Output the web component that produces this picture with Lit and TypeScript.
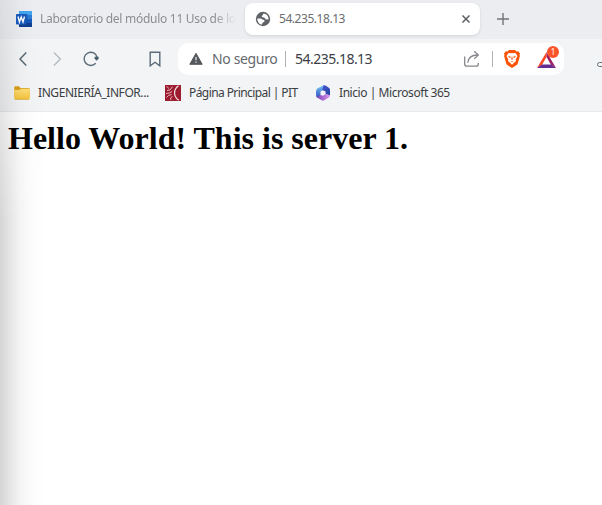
import { LitElement, html, css, svg } from "lit";
import { customElement } from "lit/decorators.js";

const word = html`<svg width="16" height="16" viewBox="0 0 16 16">
  <rect x="3" width="13" height="4" fill="#41a5ee"/><rect x="3" y="4" width="13" height="4" fill="#2b7cd3"/>
  <rect x="3" y="8" width="13" height="4" fill="#185abd"/><rect x="3" y="12" width="13" height="4" fill="#103f91"/>
  <rect x="5" y="3" width="6.5" height="11" fill="#103f91" opacity=".4"/>
  <rect y="3" width="10.5" height="10.5" rx=".8" fill="#185abd"/>
  <path d="M2 5.5 3.4 11 5.2 6 7 11 8.500 5.500" fill="none" stroke="#fff" stroke-width="1.400"/></svg>`;

const globe = html`<svg width="16" height="16" viewBox="0 0 16 16">
  <circle cx="8" cy="8" r="7.200" fill="#5f6368"/>
  <path d="M2.300 7.500C4 7.300 6.800 7.200 7.300 8.500L9.500 9.300 9.300 11 7.600 11.500 7 13.600C4.200 13.300 2.200 10.700 2.300 7.500z" fill="#fff"/>
  <path d="M8.500 2.400 7.700 4.200 6.600 4.900 7.200 6.300 9.300 6.600 10.600 8.300 13.600 8.600C13.800 5.300 12 2.800 8.500 2.400z" fill="#fff"/></svg>`;

const line = (d: string, color: string, w = 1.4) =>
  html`<svg width="18" height="18" viewBox="0 0 18 18" fill="none" stroke=${color} stroke-width=${w}>${svg`<path d=${d} />`}</svg>`;

const reload = html`<svg width="18" height="18" viewBox="0 0 18 18">
  <path d="M13.700 13.200A6.600 6.600 0 1 1 15.200 7.500" fill="none" stroke="#5b6b78" stroke-width="1.400"/>
  <path d="M12.600 6.700h4v2l-2 2-2-2z" fill="#44606f"/></svg>`;

const warning = html`<svg width="14" height="14" viewBox="0 0 14 14">
  <path d="M7 1.300 13.200 12.300H.8z" fill="#55595e" stroke="#55595e" stroke-width="1" stroke-linejoin="round"/>
  <path d="M7 5v3.300M7 9.500v1.300" stroke="#fff" stroke-width="1.100"/></svg>`;

const share = html`<svg width="18" height="18" viewBox="0 0 18 18" fill="none" stroke="#85878b" stroke-width="1.300">
  <path d="M1.700 6.500V14q0 2.200 2.200 2.200h9.200q2.200 0 2.200-2.200v-1M4.800 12.800C5.300 7.800 8.200 5 14.500 5M11.200 1.300 15.300 5 11.200 8.900"/></svg>`;

const lion = html`<svg width="16" height="18" viewBox="0 0 16 18">
  <path d="M5 0h6l1.500 1.400 1.700-.2L16 3.400l-.5 1.600.4 1-2 7.300q-.3 1-1.200 1.700L8 18l-4.700-3q-.9-.7-1.200-1.700L.1 6l.4-1L0 3.400l1.800-2.200 1.700.2z" fill="#fb5407"/>
  <path d="M5.200 2.900 8 3.300l2.800-.4 1.400.9 1.200 2.400-1.700 3.300.3 1.600-2 1.600L8 14.800l-2-2.100-2-1.600.3-1.600-1.700-3.300 1.200-2.400z" fill="#fff"/>
  <path d="m4 6 2.400.4.500 1-1.700.4zM12 6l-2.400.4-.5 1 1.700.4zM6.200 10.700 8 11.400l1.800-.7L8 12.500zM7.700 6.500h.6l.4 2.800L8 10l-.7-.7z" fill="#fb5407"/></svg>`;

const bat = html`<svg width="19" height="16" viewBox="0 0 19 16">
  <path d="M9.500 0 0 16l5-3.300L9.500 5z" fill="#ff4724"/>
  <path d="M9.500 0 19 16l-5-3.300L9.500 5z" fill="#9e1f63"/>
  <path d="M0 16h19l-5-3.500H5z" fill="#662d91"/></svg>`;

const folder = html`<svg width="16" height="14" viewBox="0 0 16 14">
  <defs><linearGradient id="f" x2="0" y2="1"><stop stop-color="#ffe07a"/><stop offset="1" stop-color="#f7c43b"/></linearGradient></defs>
  <path d="M.3 1.300q0-1 1-1h3.500L6.500 2h8.200q1 0 1 1v8H.3z" fill="#dda01d"/>
  <path d="M.3 4h5L7 2.800h8.700v9.400q0 1-1 1H1.300q-1 0-1-1z" fill="url(#f)"/><path d="M.8 13.300h14.500" stroke="#d9a52c" stroke-width=".8"/></svg>`;

const pit = html`<svg width="16" height="16" viewBox="0 0 16 16">
  <path d="M0 0h16v16H0z" fill="#9c1c30"/>
  <path d="M13.500 .8C8.200 4.500 8.200 11.500 13.800 15.300" fill="none" stroke="#f4dfe2" stroke-width="1.200"/>
  <path d="M1.500 1.500 4 3.500M7.500 1.500 5 5 2 5.500M7 6.500 4.500 8 1 8.500M6.500 9.500 3.500 10.500 1.500 12.500M7.500 11.500 5.500 13 6 15" fill="none" stroke="#e5b3ba" stroke-width="1"/></svg>`;

const m365 = html`<svg width="16" height="16" viewBox="0 0 16 16">
  <defs><linearGradient id="a" x2="0" y2="1"><stop stop-color="#73c5f4"/><stop offset="1" stop-color="#3551bf"/></linearGradient>
  <linearGradient id="b"><stop stop-color="#7b3bb5"/><stop offset="1" stop-color="#dc9bee"/></linearGradient>
  <linearGradient id="c" x2="1" y2="1"><stop stop-color="#4a55d5"/><stop offset="1" stop-color="#20459d"/></linearGradient></defs>
  <path d="M8.500.3 2.800 3.300Q1 4.300 1 6.300v4q0 2 2 2.500l2.500-1.800V6.500L9.800 4z" fill="url(#a)"/>
  <path d="M8.500.3q1-.3 2 .3l3 1.800Q15 3.300 15 5v5.500L10.600 9V6.500L7.200 5z" fill="url(#c)"/>
  <path d="M1.300 11.500q.3.800 1.200 1.300l4.200 2.500q1.300.8 2.600 0l4.200-2.500q1.500-1 1.500-2.600L10.600 9 8 10.700l-2.500-.8-2.300 2.200z" fill="url(#b)"/></svg>`;

@customElement("app-root")
export class AppRoot extends LitElement {
  static styles = css`
    :host { display: block; position: relative; width: 602px; height: 505px; overflow: hidden; background: #fff;
      font: 12px/16px "Noto Sans", "Open Sans", sans-serif; color: #3b3e42; }
    * { box-sizing: border-box; }
    svg { display: block; flex: none; }
    span { white-space: nowrap; }
    .tabs { height: 39px; background: #ecedf1; display: flex; align-items: flex-start; padding-top: 3px; }
    .tab { height: 32px; display: flex; align-items: center; color: #8b8d91; }
    .idle { width: 245px; padding-left: 16px; }
    .idle span { margin-left: 8px; width: 196px; letter-spacing: -.28px;
      mask-image: linear-gradient(90deg, #000 174px, transparent 196px); }
    .active { width: 235px; background: #fff; border-radius: 8px; padding: 0 8px 0 10px; color: #6a6c70;
      box-shadow: 0 1px 3px #0000001c; }
    .active span { flex: 1; margin-left: 8px; letter-spacing: -.45px; }
    .plus { margin: 7px 0 0 14px; }
    .bar { height: 40px; background: #f3f4f6; display: flex; align-items: center; padding-left: 14px; }
    .gap { margin-left: 16px; }
    .mark { margin-left: 46px; }
    .address { flex: none; width: 386px; height: 32px; margin-left: 14px; border-radius: 10px; background: #fff; display: flex;
      align-items: center; padding-left: 11px; font-size: 14px; }
    .address > * { flex: none; }
    .insecure { margin-left: 9px; width: 65px; color: #65686d; letter-spacing: -.35px; }
    .rule { width: 1px; height: 16px; background: #b0b2b6; margin-left: 8px; }
    .share + .rule { margin-left: 11px; }
    .url { margin-left: 9px; width: 168px; letter-spacing: -.52px; color: #3b3e44; }
    .lion { margin-left: 11px; }
    .bat { margin-left: 17px; position: relative; top: 1px; }
    .badge { position: absolute; left: 10px; top: -6px; width: 12px; height: 12px; border-radius: 6px;
      background: #fb542b; color: #fff; font-size: 8px; line-height: 12px; text-align: center; }
    .key { margin: 11px 0 0 33px; width: 8px; height: 5px; border: 1.5px solid #5f6f7b; border-radius: 3px; flex: none; }
    .marks { height: 33px; background: #f3f4f6; border-bottom: 1px solid #e8e9eb; display: flex; align-items: center;
      padding: 0 0 5px 14px; }
    .marks span { margin-left: 8px; }
    .m1 { width: 127px; letter-spacing: -.43px; }
    .m2 { width: 126px; letter-spacing: -.58px; }
    .m3 { letter-spacing: -.44px; }
    h1 { margin: 0; padding: 8px 8px 0; font: bold 32px/37px "Liberation Serif", serif; color: #000; }
    .shade { position: absolute; inset: 0 auto 0 0; width: 44px; pointer-events: none;
      background: linear-gradient(90deg, #0000002a, #0000001a 10px, #0000000b 20px, #00000004 30px, transparent);
      mask-image: linear-gradient(#0006, #0009 100px, #000 220px); }
  `;

  render() {
    return html`
      <div class="tabs">
        <div class="tab idle">${word}<span>Laboratorio del módulo 11 Uso de lo</span></div>
        <div class="tab active">${globe}<span>54.235.18.13</span>
          <svg width="12" height="12" viewBox="0 0 12 12"><path d="m2.500 2.500 7 7m0-7-7 7" stroke="#5c5f63" stroke-width="1.500"/></svg></div>
        <div class="plus">${line("M9 3v12M3 9h12", "#717478")}</div>
      </div>
      <div class="bar">
        ${line("M12.300 2.500 6 9l6.300 6.500", "#536572")}
        <div class="gap">${line("m6 2.500 6.300 6.500L6 15.500", "#b3bbc1")}</div>
        <div class="gap">${reload}</div>
        <div class="mark">${line("M4.200 2.200h9.600v13.600L9 12.300l-4.800 3.500z", "#5b6b78")}</div>
        <div class="address">
          ${warning}<span class="insecure">No seguro</span><div class="rule"></div><span class="url">54.235.18.13</span>
          <div class="share">${share}</div><div class="rule"></div>
          <div class="lion">${lion}</div>
          <div class="bat">${bat}<div class="badge">1</div></div>
        </div>
        <div class="key"></div>
      </div>
      <div class="marks">
        ${folder}<span class="m1">INGENIERÍA_INFOR...</span>
        ${pit}<span class="m2">Página Principal | PIT</span>
        ${m365}<span class="m3">Inicio | Microsoft 365</span>
      </div>
      <h1>Hello World! This is server 1.</h1>
      <div class="shade"></div>
    `;
  }
}
